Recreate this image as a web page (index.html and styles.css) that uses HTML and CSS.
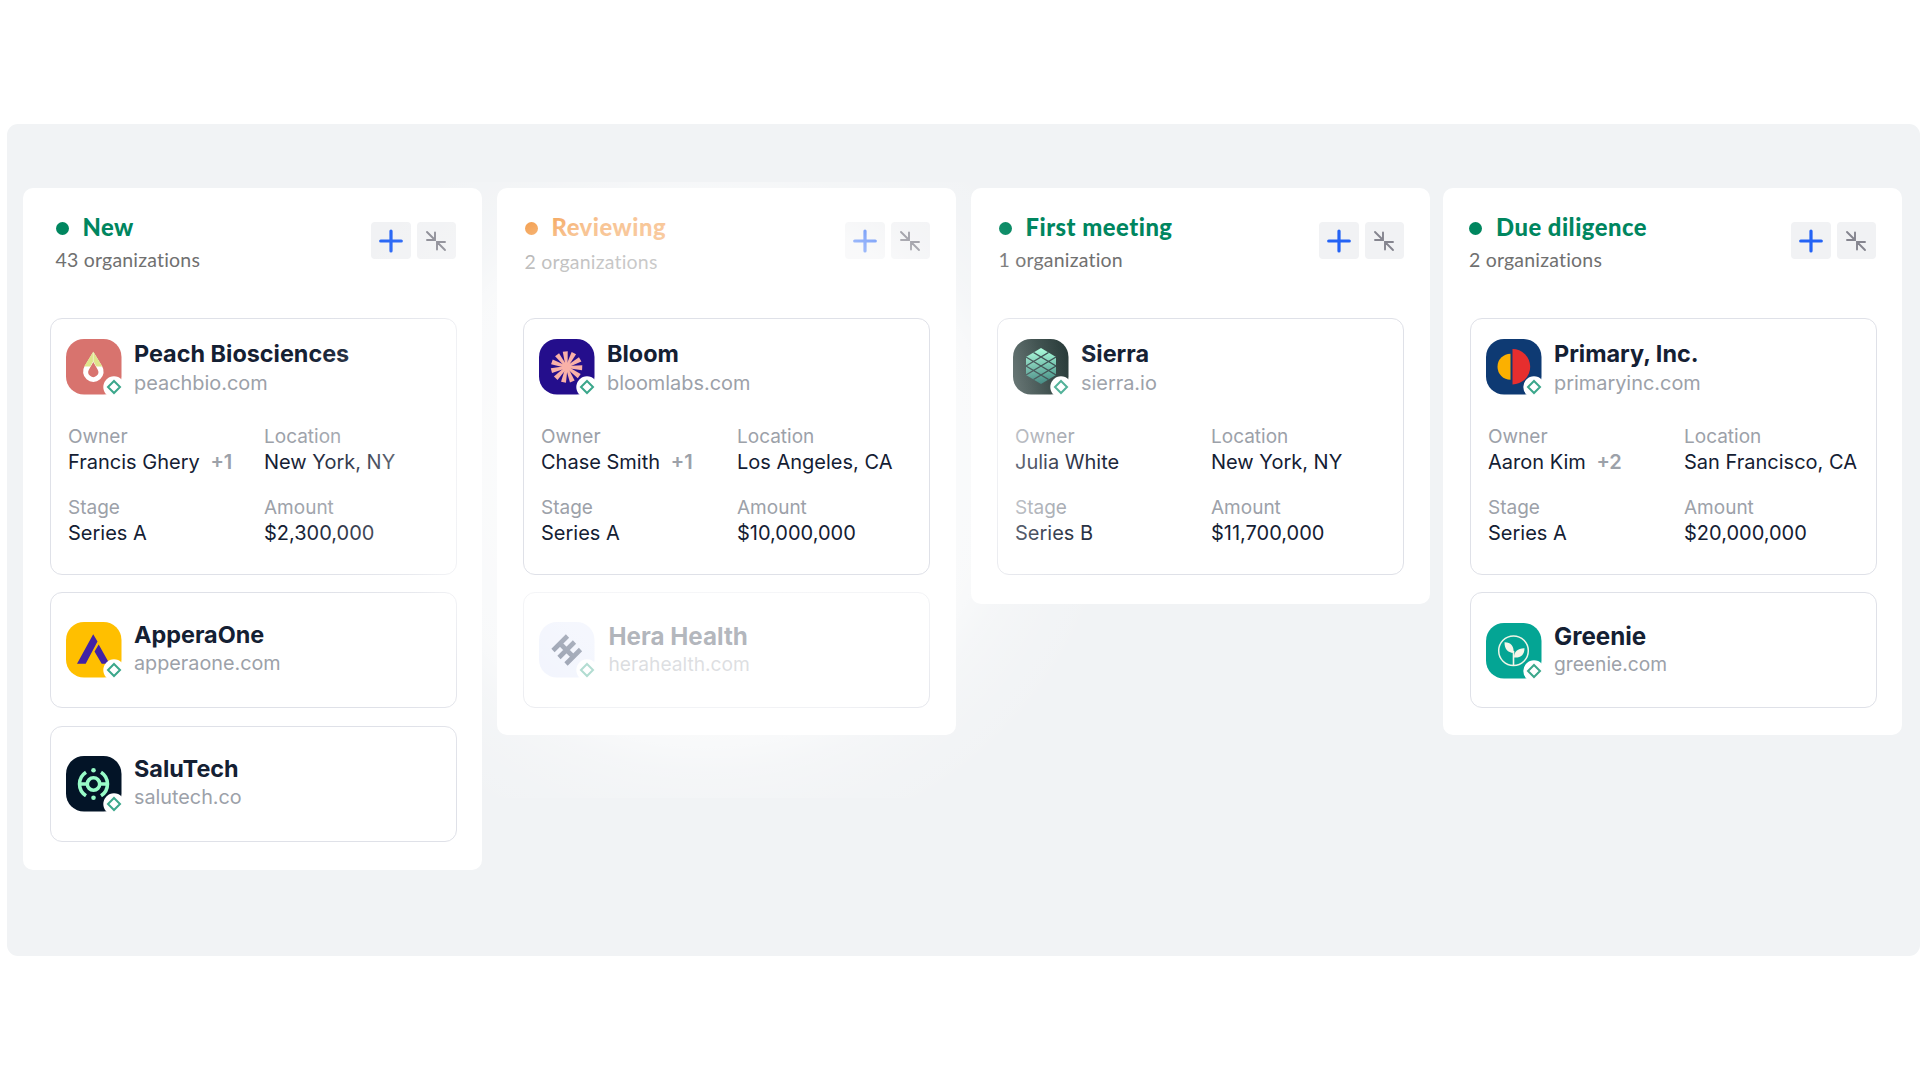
FILE: index.html
```html
<!DOCTYPE html>
<html lang="en">
<head>
    <meta charset="UTF-8">
    <meta name="viewport" content="width=device-width, initial-scale=1.0">
    <title>Deal Pipeline</title>
    <link rel="stylesheet" href="styles.css">
</head>
<body>
    <!-- Shared icons -->
    <svg class="sprite" width="0" height="0">
        <symbol id="plus" viewBox="0 0 24 24">
            <path d="M12 2v20M1.7 12h20.6" fill="none" stroke="#2463f5" stroke-width="3.2" stroke-linecap="round"/>
        </symbol>
        <symbol id="collapse" viewBox="0 0 22 22">
            <path d="M2 2l8 8M10 2.5V10H2M20 20l-8-8M12 19.500V12h8" fill="none" stroke="#85858f" stroke-width="1.9" stroke-linecap="round"/>
        </symbol>
        <symbol id="badge" viewBox="0 0 22 22">
            <circle cx="11" cy="11" r="10.700" fill="#fff"/>
            <path d="M11 5l6 6-6 6-6-6z" fill="none" stroke="#3ba78b" stroke-width="2"/>
        </symbol>
    </svg>

    <main class="board">
        <section class="column column-new">
            <header class="column-header">
                <div class="heading">
                    <h2><span class="dot"></span>New</h2>
                    <p>43 organizations</p>
                </div>
                <div class="actions">
                    <button aria-label="Add"><svg class="plus"><use href="#plus"/></svg></button>
                    <button aria-label="Collapse"><svg class="collapse"><use href="#collapse"/></svg></button>
                </div>
            </header>

            <article class="card">
                <div class="org">
                    <div class="logo">
                        <svg viewBox="0 0 56 56">
                            <rect width="55.500" height="55.500" rx="18" fill="#d8736e"/>
                            <path d="M27.300 12.700L36 27A10.300 10.300 0 1 1 18.700 27ZM27.300 23L23 30.500A5 5 0 1 0 31.600 30.500Z" fill="#fff" fill-rule="evenodd"/>
                            <path d="M27.300 12.700L36.400 27.600H30.300L27.300 22 24.300 27.600H18.200Z" fill="#dfe58c"/>
                            <path d="M27.300 14v8" stroke="#f4f6d0" stroke-width=".8"/>
                        </svg>
                        <svg class="badge"><use href="#badge"/></svg>
                    </div>
                    <div class="org-text">
                        <h3>Peach Biosciences</h3>
                        <p>peachbio.com</p>
                    </div>
                </div>
                <dl class="fields">
                    <div><dt>Owner</dt><dd>Francis Ghery <span class="more">+1</span></dd></div>
                    <div><dt>Location</dt><dd>New York, NY</dd></div>
                    <div><dt>Stage</dt><dd>Series A</dd></div>
                    <div><dt>Amount</dt><dd>$2,300,000</dd></div>
                </dl>
            </article>

            <article class="card compact">
                <div class="org">
                    <div class="logo">
                        <svg viewBox="0 0 56 56">
                            <rect width="55.500" height="55.500" rx="18" fill="#ffbf00"/>
                            <path d="M11 41.800H19.700L31.500 19.500 27.200 12.200ZM32.700 22.500L28.500 29.500 35.700 41.800H43.500Z" fill="#4222a5"/>
                        </svg>
                        <svg class="badge"><use href="#badge"/></svg>
                    </div>
                    <div class="org-text">
                        <h3>ApperaOne</h3>
                        <p>apperaone.com</p>
                    </div>
                </div>
            </article>

            <article class="card compact">
                <div class="org">
                    <div class="logo">
                        <svg viewBox="0 0 56 56">
                            <rect width="55.500" height="55.500" rx="18" fill="#031427"/>
                            <g fill="none" stroke="#98fbc8" stroke-width="3.600">
                                <circle cx="27.500" cy="28" r="6.200"/>
                                <path d="M13.500 28h8M33.500 28h8M20 16.200A14 14 0 0 0 20 39.800M35 16.200A14 14 0 0 1 35 39.800"/>
                            </g>
                            <circle cx="27.500" cy="14.300" r="2.300" fill="#98fbc8"/>
                            <circle cx="27.500" cy="41.700" r="2.300" fill="#98fbc8"/>
                        </svg>
                        <svg class="badge"><use href="#badge"/></svg>
                    </div>
                    <div class="org-text">
                        <h3>SaluTech</h3>
                        <p>salutech.co</p>
                    </div>
                </div>
            </article>
        </section>

        <section class="column column-reviewing">
            <header class="column-header">
                <div class="heading">
                    <h2><span class="dot"></span>Reviewing</h2>
                    <p>2 organizations</p>
                </div>
                <div class="actions">
                    <button aria-label="Add"><svg class="plus"><use href="#plus"/></svg></button>
                    <button aria-label="Collapse"><svg class="collapse"><use href="#collapse"/></svg></button>
                </div>
            </header>

            <article class="card highlighted">
                <div class="org">
                    <div class="logo">
                        <svg viewBox="0 0 56 56">
                            <defs><path id="ray" d="M-1 0L-2.500 -15.600 2.500 -15.600 1 0Z"/></defs>
                            <rect width="55.500" height="55.500" rx="18" fill="#240e8c"/>
                            <g transform="translate(27.600 28) rotate(-5)" fill="#f9b1a8">
                                <circle r="4.500"/>
                                <use href="#ray"/>
                                <use href="#ray" transform="rotate(32.700)"/>
                                <use href="#ray" transform="rotate(65.500)"/>
                                <use href="#ray" transform="rotate(98.200)"/>
                                <use href="#ray" transform="rotate(130.900)"/>
                                <use href="#ray" transform="rotate(163.600)"/>
                                <use href="#ray" transform="rotate(196.400)"/>
                                <use href="#ray" transform="rotate(229.100)"/>
                                <use href="#ray" transform="rotate(261.800)"/>
                                <use href="#ray" transform="rotate(294.500)"/>
                                <use href="#ray" transform="rotate(327.300)"/>
                            </g>
                        </svg>
                        <svg class="badge"><use href="#badge"/></svg>
                    </div>
                    <div class="org-text">
                        <h3>Bloom</h3>
                        <p>bloomlabs.com</p>
                    </div>
                </div>
                <dl class="fields">
                    <div><dt>Owner</dt><dd>Chase Smith <span class="more">+1</span></dd></div>
                    <div><dt>Location</dt><dd>Los Angeles, CA</dd></div>
                    <div><dt>Stage</dt><dd>Series A</dd></div>
                    <div><dt>Amount</dt><dd>$10,000,000</dd></div>
                </dl>
            </article>

            <article class="card compact low">
                <div class="org">
                    <div class="logo">
                        <svg viewBox="0 0 56 56">
                            <rect width="55.500" height="55.500" rx="18" fill="#e2e8fb"/>
                            <path d="M14 28.500L28.500 14M20 35.500L35.500 20M27 42L41.500 27.500M20 20.500L35.500 36" fill="none" stroke="#14264a" stroke-width="4.600"/>
                        </svg>
                        <svg class="badge"><use href="#badge"/></svg>
                    </div>
                    <div class="org-text">
                        <h3>Hera Health</h3>
                        <p>herahealth.com</p>
                    </div>
                </div>
            </article>
        </section>

        <section class="column column-meeting">
            <header class="column-header">
                <div class="heading">
                    <h2><span class="dot"></span>First meeting</h2>
                    <p>1 organization</p>
                </div>
                <div class="actions">
                    <button aria-label="Add"><svg class="plus"><use href="#plus"/></svg></button>
                    <button aria-label="Collapse"><svg class="collapse"><use href="#collapse"/></svg></button>
                </div>
            </header>

            <article class="card">
                <div class="org">
                    <div class="logo">
                        <svg viewBox="0 0 56 56">
                            <defs>
                                <linearGradient id="slate" x1="0" x2="1" y1="0" y2="0">
                                    <stop offset="0" stop-color="#2f4341"/>
                                    <stop offset="1" stop-color="#152927"/>
                                </linearGradient>
                                <linearGradient id="mint" x1="0" x2="0" y1="0" y2="1">
                                    <stop offset="0" stop-color="#a0ffd8"/>
                                    <stop offset="1" stop-color="#20726a"/>
                                </linearGradient>
                                <clipPath id="hex"><path d="M28 9L43 18V36L28 45 13 36V18Z"/></clipPath>
                            </defs>
                            <rect width="55.500" height="55.500" rx="18" fill="url(#slate)"/>
                            <g clip-path="url(#hex)">
                                <path d="M13 9H43V45H13Z" fill="url(#mint)"/>
                                <path d="M13 9L43 27M13 18L43 36M13 27L43 45M43 9L13 27M43 18L13 36M43 27L13 45" stroke="#22383a" stroke-width="1.400"/>
                            </g>
                        </svg>
                        <svg class="badge"><use href="#badge"/></svg>
                    </div>
                    <div class="org-text">
                        <h3>Sierra</h3>
                        <p>sierra.io</p>
                    </div>
                </div>
                <dl class="fields">
                    <div><dt>Owner</dt><dd>Julia White</dd></div>
                    <div><dt>Location</dt><dd>New York, NY</dd></div>
                    <div><dt>Stage</dt><dd>Series B</dd></div>
                    <div><dt>Amount</dt><dd>$11,700,000</dd></div>
                </dl>
            </article>
        </section>

        <section class="column column-diligence">
            <header class="column-header">
                <div class="heading">
                    <h2><span class="dot"></span>Due diligence</h2>
                    <p>2 organizations</p>
                </div>
                <div class="actions">
                    <button aria-label="Add"><svg class="plus"><use href="#plus"/></svg></button>
                    <button aria-label="Collapse"><svg class="collapse"><use href="#collapse"/></svg></button>
                </div>
            </header>

            <article class="card">
                <div class="org">
                    <div class="logo">
                        <svg viewBox="0 0 56 56">
                            <rect width="55.500" height="55.500" rx="18" fill="#0e3a73"/>
                            <path d="M24.500 14.700A13 13 0 0 0 24.500 40.700Z" fill="#fbb000"/>
                            <path d="M26.500 10A17.700 17.700 0 0 1 26.500 45.400Z" fill="#e62e2e"/>
                        </svg>
                        <svg class="badge"><use href="#badge"/></svg>
                    </div>
                    <div class="org-text">
                        <h3>Primary, Inc.</h3>
                        <p>primaryinc.com</p>
                    </div>
                </div>
                <dl class="fields">
                    <div><dt>Owner</dt><dd>Aaron Kim <span class="more">+2</span></dd></div>
                    <div><dt>Location</dt><dd>San Francisco, CA</dd></div>
                    <div><dt>Stage</dt><dd>Series A</dd></div>
                    <div><dt>Amount</dt><dd>$20,000,000</dd></div>
                </dl>
            </article>

            <article class="card compact low">
                <div class="org">
                    <div class="logo">
                        <svg viewBox="0 0 56 56">
                            <rect width="55.500" height="55.500" rx="18" fill="#04a594"/>
                            <circle cx="27.500" cy="27.800" r="14.800" fill="none" stroke="#eef5e6" stroke-width="1.500"/>
                            <path d="M18.500 19.200C24.500 19 28 22.500 27.700 30 21.500 29.500 18.500 26 18.500 19.200ZM38.500 25.200C38.500 31.500 35 35 28 34.500 28 28.500 32 25 38.500 25.200Z" fill="#f6f6ea"/>
                            <path d="M27.500 28V43" stroke="#f6f6ea" stroke-width="1.600"/>
                        </svg>
                        <svg class="badge"><use href="#badge"/></svg>
                    </div>
                    <div class="org-text">
                        <h3>Greenie</h3>
                        <p>greenie.com</p>
                    </div>
                </div>
            </article>
        </section>
    </main>
</body>
</html>
```

FILE: styles.css
```css
* {
    margin: 0;
    padding: 0;
    box-sizing: border-box;
}

body {
    font-family: Inter, 'Liberation Sans', sans-serif;
    color: #142033;
    background-color: #fff;
    padding: 124px 0 0 7px;
}

.sprite {
    position: absolute;
}

.board {
    position: relative;
    display: flex;
    align-items: flex-start;
    gap: 15px;
    height: 832px;
    padding: 64px 18px 0 16px;
    background-color: #f1f3f5;
    border-radius: 11px;
}

/* White glow around the highlighted card */
.board::after {
    content: '';
    position: absolute;
    left: 278px;
    top: 58px;
    width: 860px;
    height: 616px;
    z-index: 1;
    background: radial-gradient(420px 395px at 422px 290px,
        rgba(255, 255, 255, 0.78) 0%,
        rgba(255, 255, 255, 0.66) 50%,
        rgba(255, 255, 255, 0.54) 68%,
        rgba(255, 255, 255, 0.28) 76%,
        rgba(255, 255, 255, 0.14) 85%,
        rgba(255, 255, 255, 0) 100%);
}

.column {
    width: 459px;
    padding: 0 26px 27px;
    background-color: #fff;
    border-radius: 10px;
}

.column-new {
    padding: 0 25px 28px 27px;
}

.column-meeting {
    padding-bottom: 29px;
}

.column-diligence {
    margin-left: -2px;
    padding: 0 25px 27px 27px;
}

.column-header {
    display: flex;
    justify-content: space-between;
    align-items: flex-start;
    height: 130px;
    padding-top: 25px;
}

.heading {
    font-family: Lato, 'Open Sans', sans-serif;
    font-variant-ligatures: none;
}

.heading h2 {
    display: flex;
    align-items: center;
    gap: 14px;
    color: #00865f;
    font-size: 23.8px;
    font-weight: 900;
    line-height: 28px;
    letter-spacing: 0.5px;
}

.heading p {
    margin-top: 7px;
    color: #707070;
    font-size: 19.5px;
    line-height: 24px;
    letter-spacing: 0.2px;
}

.dot {
    width: 13px;
    height: 13px;
    margin-top: 3px;
    border-radius: 50%;
    background-color: currentColor;
}

.column-new .heading {
    padding-left: 5.5px;
}

.column-reviewing .heading,
.column-meeting .heading {
    padding-left: 1.5px;
}

.column-reviewing h2 {
    color: #f08016;
}

.column-reviewing .heading p {
    margin-top: 9px;
}

.column-diligence .heading {
    margin-left: -1px;
}

.actions {
    display: flex;
    gap: 6px;
    margin-top: 9px;
}

.column-new .actions,
.column-diligence .actions {
    margin-right: 1px;
}

.actions button {
    display: flex;
    align-items: center;
    justify-content: center;
    width: 39.5px;
    height: 37px;
    border: none;
    border-radius: 4px;
    background-color: #f1f2f4;
}

.plus {
    width: 24px;
    height: 24px;
}

.collapse {
    width: 22px;
    height: 22px;
}

.card {
    height: 257px;
    padding: 20px 16px 0 15px;
    background-color: #fff;
    border: 1px solid #dfe1e8;
    border-radius: 12px;
}

.highlighted {
    position: relative;
    z-index: 2;
}

.compact {
    height: 116px;
    margin-top: 17px;
    padding-top: 29px;
}

.compact + .compact {
    margin-top: 18px;
}

.org {
    display: flex;
    gap: 12px;
    height: 56px;
}

.logo {
    position: relative;
    width: 56px;
    height: 56px;
}

.logo > svg:first-child {
    display: block;
    width: 56px;
    height: 56px;
}

.logo .badge {
    position: absolute;
    left: 36.5px;
    top: 37px;
    width: 22px;
    height: 22px;
}

.org-text {
    margin-top: 1px;
}

.org-text h3 {
    font-size: 23.4px;
    font-weight: 700;
    line-height: 28px;
}

.org-text p {
    color: #9ca1a9;
    font-size: 19.9px;
    line-height: 30px;
}

.compact .org-text {
    margin-top: -1px;
}

.compact .org-text p {
    font-size: 19.8px;
    line-height: 28px;
}

.compact.low .org-text h3 {
    font-size: 24.2px;
    line-height: 31px;
}

.compact.low .org-text p {
    font-size: 19.2px;
    line-height: 25px;
}

.column-reviewing .low .org-text {
    padding-left: 1.5px;
}

.column-diligence .low .org {
    margin-top: 1px;
}

.column-diligence .low .org-text {
    margin-top: -2px;
}

.fields {
    display: grid;
    grid-template-columns: 196px 1fr;
    row-gap: 20px;
    margin-top: 29px;
    padding-left: 2px;
}

.fields dt {
    color: #9ca1a9;
    font-size: 19px;
    line-height: 25px;
}

.fields dd {
    font-size: 20px;
    line-height: 26px;
    white-space: nowrap;
}

.more {
    margin-left: 5px;
    color: #9ca1a9;
    font-weight: 600;
}
```
